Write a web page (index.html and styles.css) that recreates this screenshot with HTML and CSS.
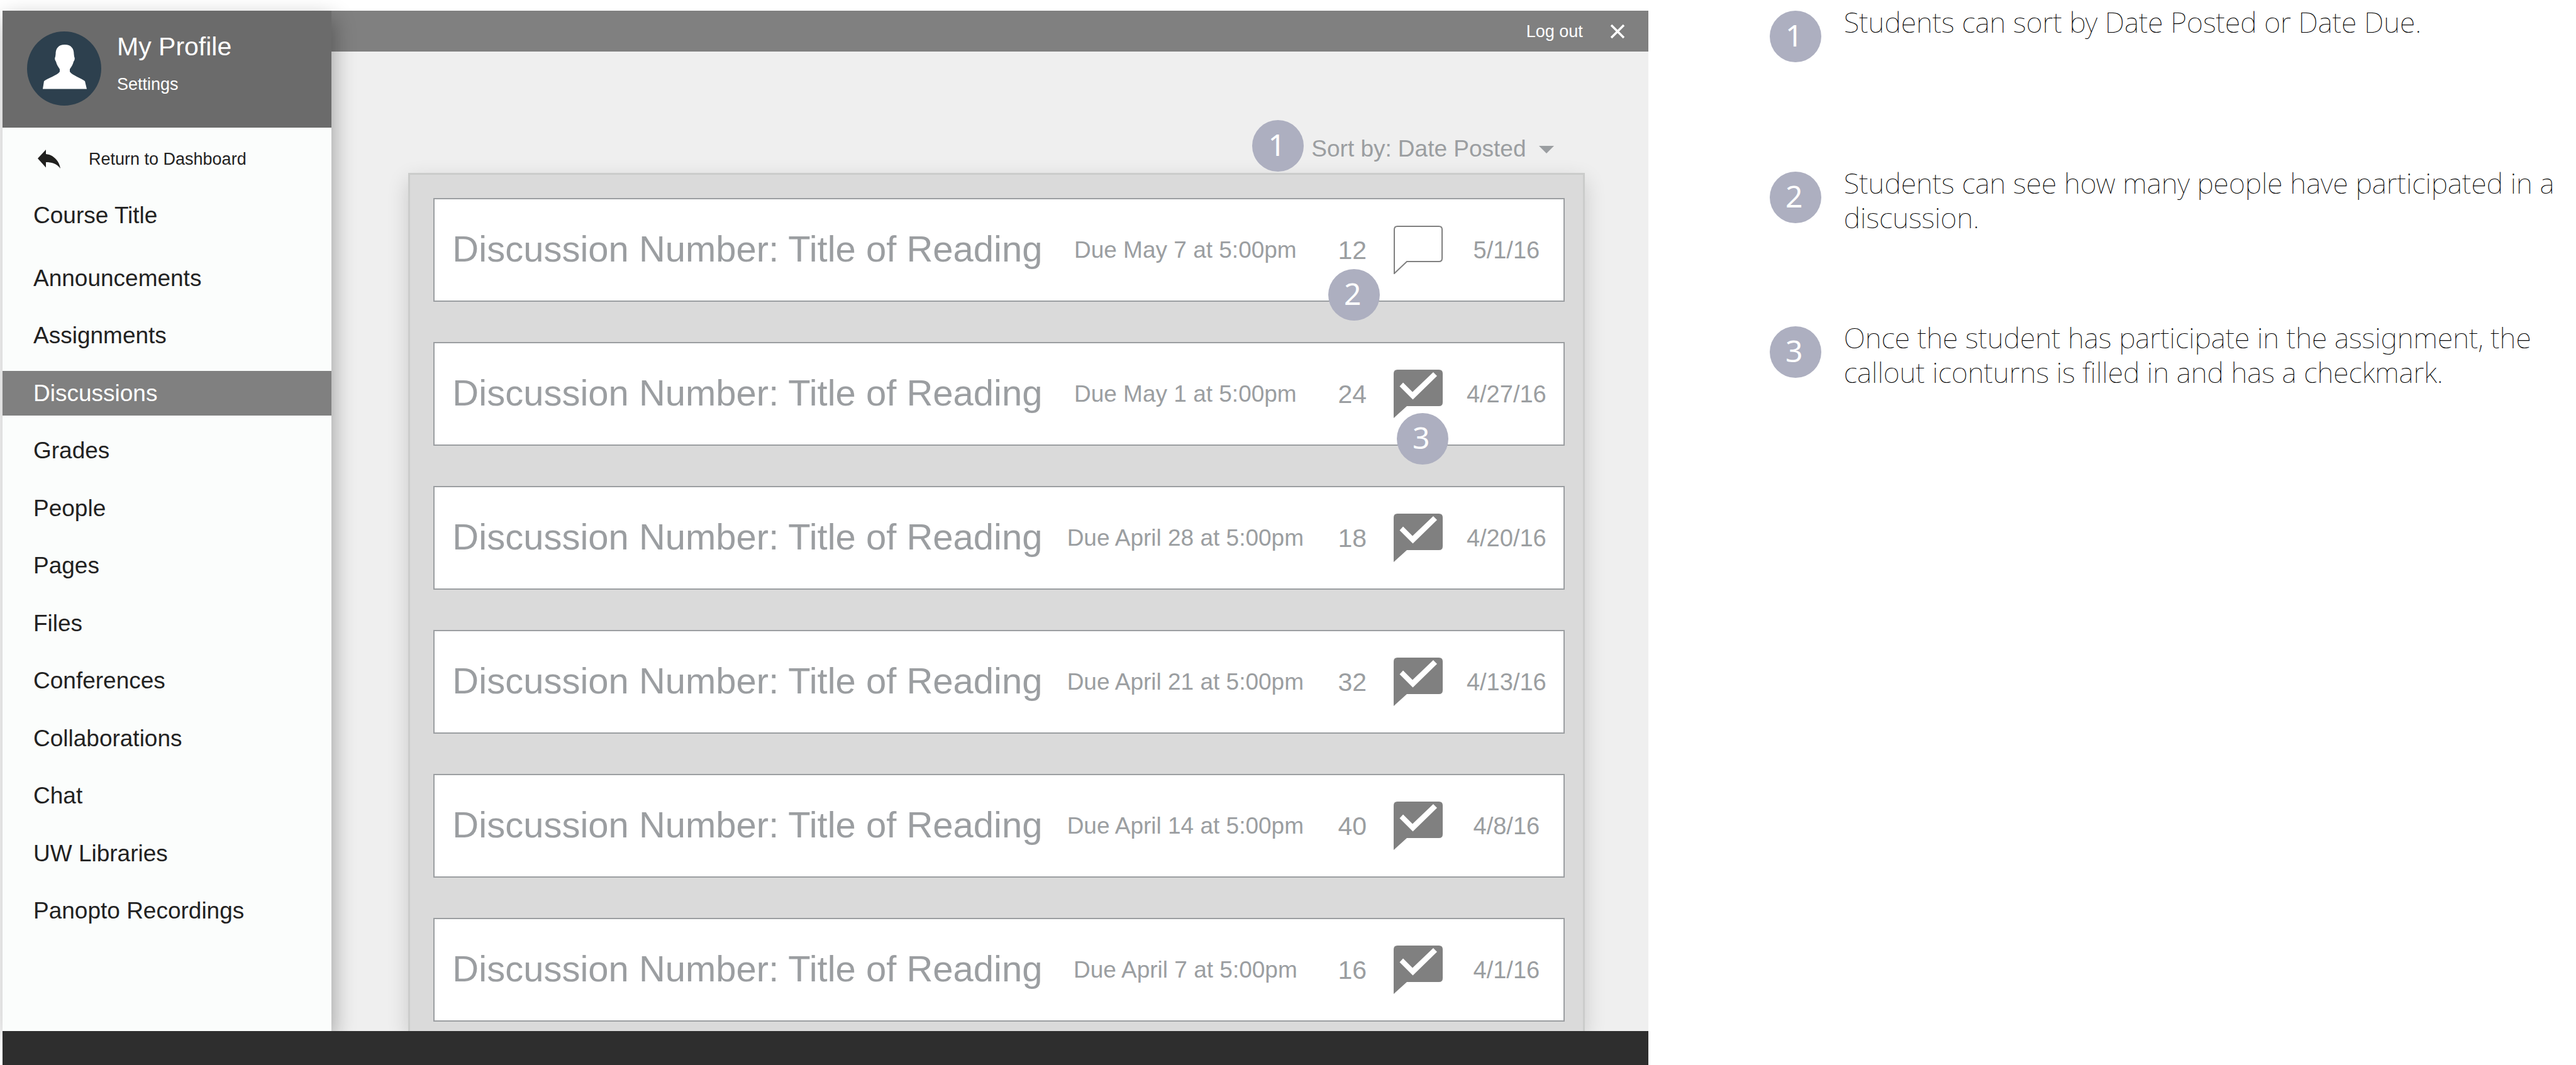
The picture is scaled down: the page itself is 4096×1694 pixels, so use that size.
FILE: index.html
```html
<!DOCTYPE html>
<html lang="en">
<head>
<meta charset="utf-8">
<meta name="viewport" content="width=device-width, initial-scale=1">
<title>Discussions</title>
<link rel="stylesheet" href="styles.css">
</head>
<body>
<svg class="symbols" aria-hidden="true">
  <symbol id="callout" viewBox="0 0 78 77">
    <path d="M1 76V6q0-5 5-5h66q5 0 5 5v46q0 5-5 5H21z"/>
  </symbol>
  <symbol id="callout-check" viewBox="0 0 78 77">
    <path d="M0 77V6q0-6 6-6h66q6 0 6 6v46q0 6-6 6H21z" fill="#808080"/>
    <path d="M9.500 26.500 15 20.500 30 35.500 63 4 69 10 30.500 47.500z" fill="#fff"/>
  </symbol>
</svg>
<div class="page">
  <div class="app">
    <aside class="sidebar">
      <div class="profile">
        <svg class="avatar" viewBox="0 0 118 118" role="img" aria-label="Profile picture">
          <circle cx="59" cy="59" r="59" fill="#2d404e"/>
          <path d="M60 21C70 21 74.500 27 74.500 36L75 40Q77 44 74 48C73 53 70 57 68 60V64C72 70 86 74 92 79L95 91.500H25L27 79C33 74 48 70 52 64V60C50 57 47 53 46 48Q43 44 45 40L45.500 36C45.500 27 50 21 60 21Z" fill="#fff"/>
        </svg>
        <div class="profile-links">
          <a class="profile-name" href="#profile">My Profile</a>
          <a class="profile-settings" href="#settings">Settings</a>
        </div>
      </div>
      <a class="return" href="#dashboard">
        <svg class="return-icon" viewBox="0 0 36 30" aria-hidden="true"><path d="M0 14 13 0V7C24 8 34 17 36 30 30 22 22 20 13 20V28.500z" fill="#20201e"/></svg>
        Return to Dashboard
      </a>
      <a class="course" href="#course">Course Title</a>
      <nav class="nav">
        <a class="nav-item" href="#announcements">Announcements</a>
        <a class="nav-item" href="#assignments">Assignments</a>
        <a class="nav-item nav-current" href="#discussions" aria-current="page">Discussions</a>
        <a class="nav-item" href="#grades">Grades</a>
        <a class="nav-item" href="#people">People</a>
        <a class="nav-item" href="#pages">Pages</a>
        <a class="nav-item" href="#files">Files</a>
        <a class="nav-item" href="#conferences">Conferences</a>
        <a class="nav-item" href="#collaborations">Collaborations</a>
        <a class="nav-item" href="#chat">Chat</a>
        <a class="nav-item" href="#libraries">UW Libraries</a>
        <a class="nav-item" href="#panopto">Panopto Recordings</a>
      </nav>
    </aside>
    <div class="content">
      <header class="topbar">
        <a class="logout" href="#logout">Log out</a>
        <button class="close" type="button" aria-label="Close">
          <svg class="close-icon" viewBox="0 0 24 24" aria-hidden="true"><path d="M2 2 22 22M22 2 2 22" stroke="#fff" stroke-width="3.500"/></svg>
        </button>
      </header>
      <main class="main">
        <div class="sort">
          <span class="badge sort-badge">1</span>
          <label for="sort">Sort by:</label>
          <select class="sort-select" id="sort">
            <option>Date Posted</option>
            <option>Date Due</option>
          </select>
          <svg class="sort-caret" viewBox="0 0 24 12" aria-hidden="true"><path d="M0 0H24L12 12z" fill="#9b9ea1"/></svg>
        </div>
        <section class="panel">
          <article class="card">
            <h2 class="title">Discussion Number: Title of Reading</h2>
            <span class="cell due">Due May 7 at 5:00pm</span>
            <span class="cell count">12<span class="badge card-badge">2</span></span>
            <span class="cell"><svg class="icon icon-outline" aria-hidden="true"><use href="#callout"/></svg></span>
            <span class="cell date">5/1/16</span>
          </article>
          <article class="card">
            <h2 class="title">Discussion Number: Title of Reading</h2>
            <span class="cell due">Due May 1 at 5:00pm</span>
            <span class="cell count">24</span>
            <span class="cell"><svg class="icon" aria-hidden="true"><use href="#callout-check"/></svg><span class="badge card-badge">3</span></span>
            <span class="cell date">4/27/16</span>
          </article>
          <article class="card">
            <h2 class="title">Discussion Number: Title of Reading</h2>
            <span class="cell due">Due April 28 at 5:00pm</span>
            <span class="cell count">18</span>
            <span class="cell"><svg class="icon" aria-hidden="true"><use href="#callout-check"/></svg></span>
            <span class="cell date">4/20/16</span>
          </article>
          <article class="card">
            <h2 class="title">Discussion Number: Title of Reading</h2>
            <span class="cell due">Due April 21 at 5:00pm</span>
            <span class="cell count">32</span>
            <span class="cell"><svg class="icon" aria-hidden="true"><use href="#callout-check"/></svg></span>
            <span class="cell date">4/13/16</span>
          </article>
          <article class="card">
            <h2 class="title">Discussion Number: Title of Reading</h2>
            <span class="cell due">Due April 14 at 5:00pm</span>
            <span class="cell count">40</span>
            <span class="cell"><svg class="icon" aria-hidden="true"><use href="#callout-check"/></svg></span>
            <span class="cell date">4/8/16</span>
          </article>
          <article class="card">
            <h2 class="title">Discussion Number: Title of Reading</h2>
            <span class="cell due">Due April 7 at 5:00pm</span>
            <span class="cell count">16</span>
            <span class="cell"><svg class="icon" aria-hidden="true"><use href="#callout-check"/></svg></span>
            <span class="cell date">4/1/16</span>
          </article>
        </section>
      </main>
    </div>
    <footer class="footer"></footer>
  </div>
  <ol class="notes">
    <li class="note note-first"><span class="badge note-badge">1</span><p class="note-text">Students can sort by Date Posted or Date Due.</p></li>
    <li class="note"><span class="badge note-badge">2</span><p class="note-text">Students can see how many people have participated in a<br>discussion.</p></li>
    <li class="note"><span class="badge note-badge">3</span><p class="note-text">Once the student has participate in the assignment, the<br>callout iconturns is filled in and has a checkmark.</p></li>
  </ol>
</div>
</body>
</html>
```
FILE: styles.css
```css
* { box-sizing: border-box; }

body {
  margin: 0;
  background: #fff;
  font-family: "Liberation Sans", Arial, sans-serif;
  font-size: 37px;
  line-height: 48px;
  color: #222;
}

a { color: inherit; text-decoration: none; }

.symbols { position: absolute; width: 0; height: 0; }

.page {
  display: grid;
  grid-template-columns: 6395fr 3605fr;
  min-height: 100vh;
  padding-left: 4px;
}

.app {
  display: grid;
  grid-template-columns: 20% 1fr;
  grid-template-rows: 1fr 54px;
  margin-top: 17px;
  background: #efefef;
}

/* Sidebar */

.sidebar {
  z-index: 1;
  display: flex;
  flex-direction: column;
  padding-bottom: 156px;
  background: #fbfdfc;
  box-shadow: 4px 12px 32px rgba(0, 0, 0, 0.32);
}

.profile {
  display: flex;
  gap: 25px;
  height: 186px;
  padding: 33px 39px;
  background: #6b6b6b;
  color: #fff;
}

.avatar { width: 118px; height: 118px; }

.profile-links { display: flex; flex-direction: column; gap: 18px; }

.profile-name { font-size: 41px; }

.profile-settings { font-size: 27px; line-height: 36px; }

.return {
  display: flex;
  align-items: center;
  gap: 45px;
  margin-top: 32px;
  padding-left: 56px;
  font-size: 27px;
  line-height: 36px;
}

.return-icon { width: 36px; height: 30px; }

.course { margin-top: 48px; padding-left: 49px; }

.nav {
  flex: 1;
  display: flex;
  flex-direction: column;
  justify-content: space-between;
  margin-top: 40px;
}

.nav-item { padding: 12px 49px; line-height: 47px; }

.nav-current { background: #808080; color: #fff; }

/* Content */

.content {
  display: flex;
  flex-direction: column;
  min-width: 0;
  overflow: hidden;
}

.topbar {
  display: flex;
  align-items: center;
  justify-content: flex-end;
  gap: 43px;
  height: 65px;
  padding-right: 37px;
  background: #808080;
  color: #fff;
  font-size: 27px;
  line-height: 36px;
}

.close { padding: 0; border: 0; background: none; }

.close-icon { display: block; width: 24px; height: 24px; }

.main {
  flex: 1;
  display: flex;
  flex-direction: column;
  padding: 131px 101px 0 122px;
  color: #9b9ea1;
}

.sort {
  position: relative;
  display: flex;
  align-self: flex-end;
  gap: 10px;
  margin: 0 49px 14px 0;
}

.sort-select {
  appearance: none;
  height: 48px;
  padding: 0 44px 0 0;
  border: 0;
  background: none;
  color: inherit;
  font: inherit;
}

.sort-caret {
  position: absolute;
  right: 0;
  top: 19px;
  width: 24px;
  height: 12px;
  pointer-events: none;
}

.panel {
  flex: 1;
  display: flex;
  flex-direction: column;
  gap: 64px;
  padding: 37px 29px 14px 37px;
  border: 3px solid #cbcccb;
  border-bottom: 0;
  background: #dadada;
  box-shadow: 0 12px 32px rgba(0, 0, 0, 0.16);
}

.card {
  display: grid;
  grid-template-columns: 1fr 422px 109px 100px 181px;
  height: 165px;
  padding-left: 28px;
  border: 2px solid #9b9ea1;
  background: #fff;
  white-space: nowrap;
}

.title {
  align-self: center;
  margin: 0;
  padding-bottom: 4px;
  font-size: 58px;
  font-weight: 400;
  line-height: 64px;
}

.cell {
  position: relative;
  display: flex;
  align-items: center;
  justify-content: center;
}

.count { font-size: 41px; }

.date { font-size: 38px; }

.icon { width: 78px; height: 77px; }

.icon-outline { fill: none; stroke: #808080; stroke-width: 2px; }

.footer { grid-column: 1 / -1; z-index: 2; background: #2e2e2e; }

/* Numbered markers and their notes */

.badge {
  display: flex;
  align-items: center;
  justify-content: center;
  width: 82px;
  height: 82px;
  padding: 0 4px 4px 0;
  border-radius: 50%;
  background: #adafc0;
  color: #fff;
  font-family: "Noto Sans", "Open Sans", sans-serif;
  font-size: 48px;
  font-weight: 400;
}

.sort-badge { position: absolute; top: -22px; left: -94px; }

.card-badge { position: absolute; z-index: 1; top: 111px; left: 16px; }

.notes {
  display: flex;
  flex-direction: column;
  gap: 136px;
  margin: 0;
  padding: 7px 0 0 193px;
  list-style: none;
}

.note { display: flex; gap: 36px; min-height: 110px; }

.note-first { min-height: 120px; }

.note-badge { flex: none; margin-top: 10px; }

.note-text {
  margin: 0;
  color: #000;
  font-family: "Noto Sans", "Open Sans", sans-serif;
  font-size: 45px;
  font-weight: 100;
  line-height: 55px;
  white-space: nowrap;
}
```
